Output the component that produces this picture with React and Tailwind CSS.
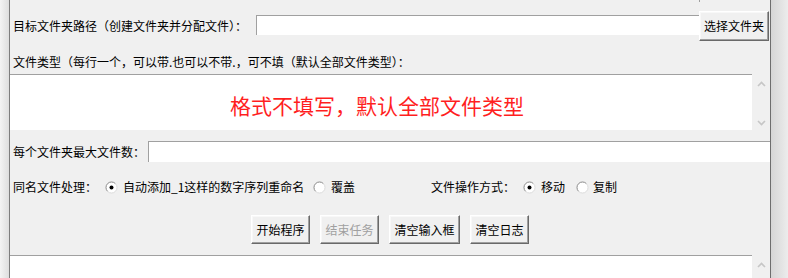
import React from "react";

function Radio({ checked }) {
  return (
    <svg width="13" height="13" viewBox="0 0 13 13" className="shrink-0 block">
      <circle cx="6.5" cy="6.5" r="5.5" fill="#fff" />
      <path d="M2.6 10.4 A5.5 5.5 0 0 1 10.4 2.6" stroke="#8a8a8a" strokeWidth="1" fill="none" />
      <path d="M10.4 2.6 A5.5 5.5 0 0 1 2.6 10.4" stroke="#dcdcdc" strokeWidth="1" fill="none" />
      {checked && <circle cx="6.5" cy="6.5" r="2" fill="#000" />}
    </svg>
  );
}

function ChevUp() {
  return (
    <svg width="9" height="6" viewBox="0 0 9 6" className="block">
      <polyline points="1,5 4.5,1.5 8,5" stroke="#c6c6c6" strokeWidth="1.6" fill="none" />
    </svg>
  );
}

function ChevDown() {
  return (
    <svg width="9" height="6" viewBox="0 0 9 6" className="block">
      <polyline points="1,1 4.5,4.5 8,1" stroke="#c6c6c6" strokeWidth="1.6" fill="none" />
    </svg>
  );
}

const btn =
  "flex items-center justify-center h-full bg-[#f0f0f0] border border-t-white border-l-white border-r-[#696969] border-b-[#696969] shadow-[inset_-1px_-1px_0_#a0a0a0,inset_1px_1px_0_#f8f8f8] whitespace-nowrap";

export default function App() {
  return (
    <div className="flex w-[788px] h-[278px] overflow-hidden bg-[#f0f0f0] text-[12px] leading-[16px] text-black font-['Noto_Sans_CJK_SC','Microsoft_YaHei',sans-serif]">
      <div className="w-[9px] shrink-0 bg-gradient-to-r from-[#f4f4f4] to-[#dedede]" />
      <div className="w-px shrink-0 bg-[#7e7e7e]" />
      <div className="flex flex-col w-[760px] shrink-0">
        <div className="h-[2px] flex shrink-0">
          <div className="ml-[689px] w-[70px] border-l border-[#a0a0a0]" />
        </div>

        {/* Row 1 */}
        <div className="mt-[9px] flex h-[30px] shrink-0">
          <div className="w-[246px] pl-[3px] self-center whitespace-nowrap">目标文件夹路径（创建文件夹并分配文件）：</div>
          <div className="mt-[4px] h-[20px] w-[443px] bg-white border-t border-l border-[#a0a0a0]" />
          <div className={`${btn} w-[70px]`}>选择文件夹</div>
        </div>

        {/* Row 2 */}
        <div className="mt-[13px] h-[16px] pl-[3px] whitespace-nowrap shrink-0">
          文件类型（每行一个，可以带.也可以不带.，可不填（默认全部文件类型）：
        </div>

        {/* Textarea 1 */}
        <div className="mt-[4px] flex h-[56px] shrink-0">
          <div className="w-[742px] bg-white border-t border-[#a0a0a0] pl-[220px] pt-[16px]">
            <span className="text-[21px] leading-[28px] text-[#ff1f1f] whitespace-nowrap">格式不填写，默认全部文件类型</span>
          </div>
          <div className="w-[18px] flex flex-col items-center pt-[7px]">
            <ChevUp />
            <div className="mt-[33px]">
              <ChevDown />
            </div>
          </div>
        </div>

        {/* Row 3 */}
        <div className="mt-[11px] flex h-[21px] items-center shrink-0">
          <div className="w-[138px] pl-[3px] whitespace-nowrap">每个文件夹最大文件数：</div>
          <div className="flex-1 h-[21px] bg-white border-t border-l border-[#a0a0a0]" />
        </div>

        {/* Row 4 */}
        <div className="mt-[17px] flex h-[16px] items-center shrink-0 whitespace-nowrap">
          <div className="w-[95px] pl-[3px]">同名文件处理：</div>
          <Radio checked />
          <div className="ml-[5px] w-[190px]">自动添加_1这样的数字序列重命名</div>
          <Radio />
          <div className="ml-[5px] w-[100px]">覆盖</div>
          <div className="w-[92px]">文件操作方式：</div>
          <Radio checked />
          <div className="ml-[5px] w-[35px]">移动</div>
          <Radio />
          <div className="ml-[4px]">复制</div>
        </div>

        {/* Row 5 buttons */}
        <div className="mt-[20px] flex h-[29px] gap-[10px] pl-[241px] shrink-0">
          <div className={`${btn} w-[59px]`}>开始程序</div>
          <div className={`${btn} w-[59px] text-[#a0a0a0]`}>结束任务</div>
          <div className={`${btn} w-[71px]`}>清空输入框</div>
          <div className={`${btn} w-[59px]`}>清空日志</div>
        </div>

        {/* Log textarea */}
        <div className="mt-[11px] flex flex-1 min-h-0">
          <div className="w-[742px] bg-white border-t border-[#a0a0a0]" />
          <div className="w-[18px] flex flex-col items-center pt-[7px]">
            <ChevUp />
          </div>
        </div>
      </div>
      <div className="w-px shrink-0 bg-[#6e6e6e]" />
      <div className="w-[17px] shrink-0 bg-gradient-to-r from-[#d6d6d6] to-[#ececec]" />
    </div>
  );
}
